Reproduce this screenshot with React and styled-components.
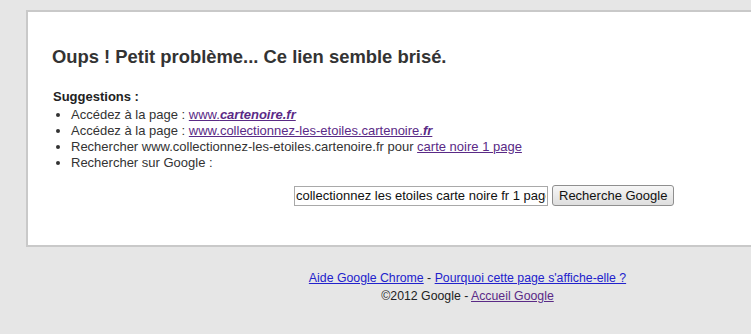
import React from 'react'
import styled, { createGlobalStyle } from 'styled-components'

const GlobalStyle = createGlobalStyle`
    html, body {
        margin: 0;
        padding: 0;
        background: #e6e6e6;
        font-family: 'Liberation Sans', Arial, sans-serif;
        color: #333;
        overflow: hidden;
    }
`

const Page = styled.div`
    width: 751px;
    height: 334px;
    padding-top: 10px;
    box-sizing: border-box;
`

const Card = styled.div`
    margin-left: 26px;
    width: 760px;
    height: 237px;
    box-sizing: border-box;
    background: #fff;
    border: 2px solid #c9c9c9;
    border-right: none;
    padding: 34px 0 0 24px;
`

const Title = styled.h1`
    margin: 0;
    font-size: 18.4px;
    font-weight: bold;
    color: #333;
    line-height: 22px;
`

const SubTitle = styled.div`
    margin: 21px 0 2px;
    font-size: 13px;
    font-weight: bold;
    color: #222;
    line-height: 16px;
    padding-left: 1px;
`

const List = styled.ul`
    margin: 0;
    padding-left: 19px;
    font-size: 13px;
    line-height: 16px;
    color: #333;
`

const Link = styled.a`
    color: ${p => (p.$visited ? '#5a2a86' : '#2222cc')};
    text-decoration: underline;
`

const Strong = styled.b`
    font-style: italic;
`

const SearchRow = styled.div`
    display: flex;
    align-items: center;
    gap: 4px;
    margin: 14px 0 0 242px;
`

const SearchInput = styled.input`
    width: 254px;
    height: 20px;
    box-sizing: border-box;
    border: 1px solid #a9a9a9;
    padding: 0 1px;
    font-family: 'Liberation Sans', Arial, sans-serif;
    font-size: 13px;
    color: #111;
    outline: none;
`

const Button = styled.button`
    height: 21px;
    box-sizing: border-box;
    padding: 0 6px;
    border: 1px solid #8f8f8f;
    border-radius: 3px;
    background: linear-gradient(#f6f6f6, #dedede);
    font-family: 'Liberation Sans', Arial, sans-serif;
    font-size: 13px;
    color: #111;
`

const Footer = styled.div`
    margin-top: 22px;
    padding-left: 184px;
    text-align: center;
    font-size: 12.3px;
    line-height: 18px;
    color: #222;
`

export default function App() {
    return (
        <Page>
            <GlobalStyle />
            <Card>
                <Title>Oups ! Petit problème... Ce lien semble brisé.</Title>
                <SubTitle>Suggestions :</SubTitle>
                <List>
                    <li>
                        Accédez à la page :{' '}
                        <Link $visited href="#">
                            www.<Strong>cartenoire.fr</Strong>
                        </Link>
                    </li>
                    <li>
                        Accédez à la page :{' '}
                        <Link $visited href="#">
                            www.collectionnez-les-etoiles.cartenoire.<Strong>fr</Strong>
                        </Link>
                    </li>
                    <li>
                        Rechercher www.collectionnez-les-etoiles.cartenoire.fr pour{' '}
                        <Link $visited href="#">carte noire 1 page</Link>
                    </li>
                    <li>Rechercher sur Google :</li>
                </List>
                <SearchRow>
                    <SearchInput
                        defaultValue="collectionnez les etoiles carte noire fr 1 page"
                    />
                    <Button>Recherche Google</Button>
                </SearchRow>
            </Card>
            <Footer>
                <div>
                    <Link href="#">Aide Google Chrome</Link> -{' '}
                    <Link href="#">Pourquoi cette page s'affiche-elle ?</Link>
                </div>
                <div>
                    ©2012 Google - <Link $visited href="#">Accueil Google</Link>
                </div>
            </Footer>
        </Page>
    )
}
